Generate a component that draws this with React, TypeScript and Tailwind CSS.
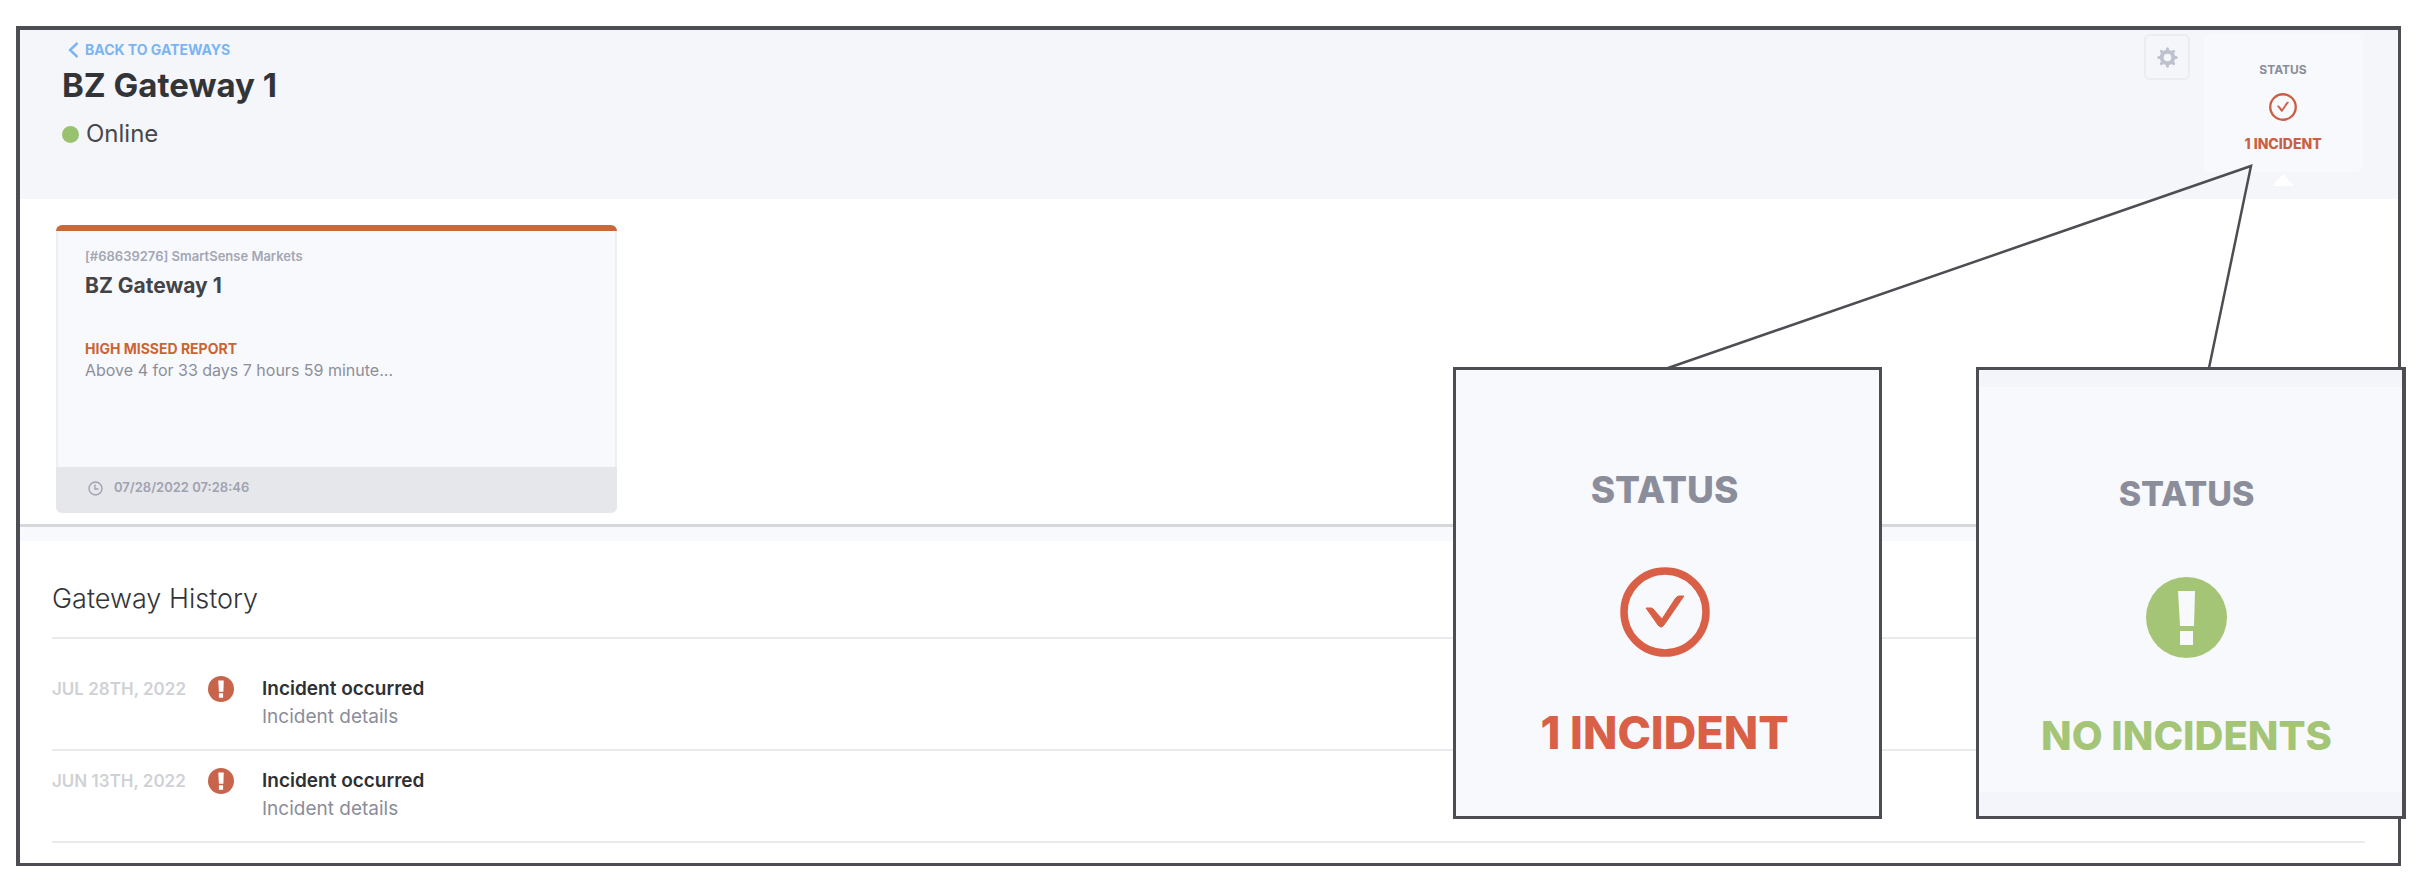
type Incident = {
  id: string;
  date: string;
  title: string;
  details: string;
};

const HISTORY: Incident[] = [
  { id: "jul-28", date: "JUL 28TH, 2022", title: "Incident occurred", details: "Incident details" },
  { id: "jun-13", date: "JUN 13TH, 2022", title: "Incident occurred", details: "Incident details" },
];

export default function App() {
  return (
    <div className="pt-[26px] pr-[25px] pb-6 pl-4 font-['Inter','Liberation_Sans',sans-serif] text-[#333438]">
      <main className="relative border-[3px] border-t-4 border-l-4 border-[#4d4e53] bg-white">
        <PageHeader />

        <section className="border-b-[3px] border-[#d6d7da] pt-[26px] pr-9 pb-[11px] pl-9">
          <IncidentCard />
        </section>
        <div className="h-[14px] bg-[#f8f9fd]" />

        <History />
        <Callouts />
      </main>
    </div>
  );
}

function PageHeader() {
  return (
    <header className="flex h-[169px] items-start justify-between bg-[#f5f6fa] pr-9 pl-[42px]">
      <div className="pt-[10px]">
        <a href="#gateways" className="flex items-center gap-[6px] pl-[6px] text-[14px] leading-5 font-bold text-[#7ab5f2]">
          <svg width="11" height="16" viewBox="0 0 11 16" fill="none" stroke="currentColor" strokeWidth="2.4" aria-hidden>
            <path d="M9.5 1 2 8l7.5 7" />
          </svg>
          BACK TO GATEWAYS
        </a>
        <h1 className="mt-[5px] text-[33px] leading-10 font-bold">BZ Gateway 1</h1>
        <div className="mt-[13px] flex items-center gap-[7px] text-[24px] leading-8 text-[#47484c]">
          <span className="size-[17px] rounded-full bg-[#99c270]" aria-hidden />
          Online
        </div>
      </div>

      <div className="flex items-start gap-[14px] pt-1">
        <button
          type="button"
          aria-label="Gateway settings"
          className="flex size-[46px] items-center justify-center rounded-md border-2 border-[#ebecf0] text-[#bfc2ce]"
        >
          <GearIcon />
        </button>
        <div className="flex flex-col items-center">
          <div className="flex w-[158px] flex-col items-center rounded-md bg-[#f8f9fc] pt-7 pb-5">
            <span className="text-[12px] leading-4 font-bold text-[#8a8d99]">STATUS</span>
            <CheckCircle className="my-[15px] size-7 text-[#ca5f45]" />
            <span className="text-[14px] leading-4 font-extrabold text-[#ca5f45]">1 INCIDENT</span>
          </div>
          <svg className="mt-[2px]" width="22" height="12" viewBox="0 0 22 12" fill="#fff" aria-hidden>
            <path d="M11 0 22 12H0Z" />
          </svg>
        </div>
      </div>
    </header>
  );
}

function IncidentCard() {
  return (
    <article className="max-w-[561px] overflow-hidden rounded-md border-t-[6px] border-[#ca6837]">
      <div className="border-x-2 border-[#eeeff2] bg-[#f8f9fd] px-[27px] pt-[15px] pb-[86px]">
        <p className="text-[13px] leading-5 font-semibold text-[#a3a6b3]">[#68639276] SmartSense Markets</p>
        <h2 className="mt-[6px] text-[21px] leading-7 font-bold text-[#434448]">BZ Gateway 1</h2>
        <p className="mt-[39px] text-[14px] leading-5 font-bold text-[#cb6433]">HIGH MISSED REPORT</p>
        <p className="text-[16px] leading-[22px] text-[#8c8f99]">Above 4 for 33 days 7 hours 59 minute...</p>
      </div>
      <footer className="flex h-[46px] items-center gap-[11px] bg-[#e6e7eb] pb-1 pl-8 text-[13px] font-semibold text-[#9fa2b0]">
        <svg width="15" height="15" viewBox="0 0 15 15" fill="none" stroke="currentColor" strokeWidth="1.4" aria-hidden>
          <circle cx="7.5" cy="7.5" r="6.5" />
          <path d="M7 3.5V8h3.5" />
        </svg>
        <time>07/28/2022 07:28:46</time>
      </footer>
    </article>
  );
}

function History() {
  return (
    <section className="pt-10 pr-[33px] pb-5 pl-8">
      <h2 className="border-b-2 border-[#ebebed] pb-5 text-[27px] leading-9 font-light">Gateway History</h2>
      <ul className="pt-5">
        {HISTORY.map((item) => (
          <li key={item.id} className="flex items-start border-b-2 border-[#ebebed] pt-4 pb-[18px]">
            <time className="w-[156px] shrink-0 text-[17px] leading-7 font-semibold text-[#d0d1d5]">{item.date}</time>
            <AlertCircle className="mt-px size-[26px] shrink-0 text-[#c8644b]" mark="#fff" />
            <div className="ml-7 text-[19px] leading-7">
              <h3 className="font-semibold text-[#2f3034]">{item.title}</h3>
              <p className="text-[#8b8d98]">{item.details}</p>
            </div>
          </li>
        ))}
      </ul>
    </section>
  );
}

/* Enlarged views of the status tile, with leader lines back to it. */
function Callouts() {
  return (
    <>
      <svg
        className="absolute top-[130px] right-[138px]"
        width="600"
        height="210"
        viewBox="0 0 600 210"
        fill="none"
        stroke="#4d4e53"
        strokeWidth="2.5"
        aria-hidden
      >
        <path d="M8 208 591 6 549 208" />
      </svg>

      <div className="absolute top-[337px] right-[516px] flex w-[429px] flex-col items-center border-[3px] border-[#4d4e53] bg-[#f8f9fd] pt-[100px] pr-[6px] pb-[59px]">
        <span className="text-[37px] leading-10 font-extrabold text-[#8b8e9a]">STATUS</span>
        <CheckCircle className="mt-[57px] mb-[52px] size-[90px] text-[#d96046]" />
        <span className="text-[45px] leading-[48px] font-extrabold text-[#d96046]">1 INCIDENT</span>
      </div>

      <div className="absolute top-[337px] -right-2 w-[430px] border-[3px] border-r-4 border-[#4d4e53] bg-[#f4f5fa] pt-[17px] pb-6">
        <div className="flex flex-col items-center bg-[#f8f9fd] pt-[87px] pr-2 pb-8">
          <span className="text-[34px] leading-10 font-extrabold text-[#8b8e9a]">STATUS</span>
          <AlertCircle className="mt-[63px] mb-[54px] size-[81px] text-[#a5c576]" mark="#f8f9fd" />
          <span className="text-[40px] leading-[48px] font-extrabold text-[#a5c576]">NO INCIDENTS</span>
        </div>
      </div>
    </>
  );
}

function CheckCircle({ className }: { className: string }) {
  return (
    <svg className={className} viewBox="0 0 90 90" fill="none" stroke="currentColor" aria-hidden>
      <circle cx="45" cy="45" r="41" strokeWidth="7.5" />
      <path
        d="M26 41h5q2 0 3 2l8 9L55 32q2-3 4-3h5L44 58q-3 4-6 0Z"
        fill="currentColor"
        strokeWidth="1"
        strokeLinejoin="round"
      />
    </svg>
  );
}

function AlertCircle({ className, mark }: { className: string; mark: string }) {
  return (
    <svg className={className} viewBox="0 0 81 81" fill="currentColor" aria-hidden>
      <circle cx="40.5" cy="40.5" r="40.5" />
      <path d="M32 14H49L48 49H34Z M34 54H47V68H34Z" fill={mark} />
    </svg>
  );
}

function GearIcon() {
  return (
    <svg width="21" height="21" viewBox="0 0 21 21" fill="none" stroke="currentColor" aria-hidden>
      <circle cx="10.5" cy="10.5" r="5.8" strokeWidth="4" />
      <g strokeWidth="3" strokeLinecap="round">
        <path d="M10.5 3V1.8M10.5 18v1.2M3 10.5H1.8M18 10.5h1.2" />
        <path d="m5.2 5.2-.8-.8M15.8 5.2l.8-.8M5.2 15.8l-.8.8M15.8 15.8l.8.8" />
      </g>
    </svg>
  );
}
